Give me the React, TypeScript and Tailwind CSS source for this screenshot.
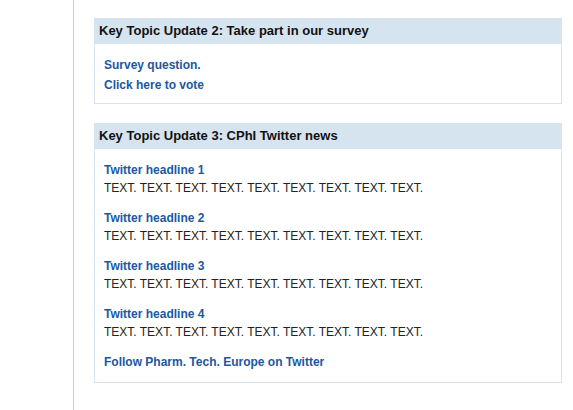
const tweets = [
  { title: "Twitter headline 1", text: "TEXT. TEXT. TEXT. TEXT. TEXT. TEXT. TEXT. TEXT. TEXT." },
  { title: "Twitter headline 2", text: "TEXT. TEXT. TEXT. TEXT. TEXT. TEXT. TEXT. TEXT. TEXT." },
  { title: "Twitter headline 3", text: "TEXT. TEXT. TEXT. TEXT. TEXT. TEXT. TEXT. TEXT. TEXT." },
  { title: "Twitter headline 4", text: "TEXT. TEXT. TEXT. TEXT. TEXT. TEXT. TEXT. TEXT. TEXT." },
];

const linkClass = "font-bold text-[12px] text-[#1c579f] hover:underline";

const TopicBox = ({ title, children }: { title: string; children: React.ReactNode }) => (
  <div className="border border-[#d6e4f0] bg-white">
    <div className="flex h-[26px] items-center bg-[#d6e4f0] px-[5px] -mx-px -mt-px">
      <h3 className="text-[13px] font-bold text-[#111]">{title}</h3>
    </div>
    {children}
  </div>
);

export default function App() {
  return (
    <div
      className="flex min-h-screen bg-white"
      style={{ fontFamily: '"Liberation Sans", Arial, Helvetica, sans-serif' }}
    >
      <div className="w-[73px] shrink-0" />
      <div className="w-px shrink-0 bg-[#cccccc]" />
      <main className="ml-[20px] flex w-[468px] flex-col gap-[19px] pt-[18px]">
        <TopicBox title="Key Topic Update 2: Take part in our survey">
          <div className="flex flex-col px-[9px] pt-[11px] pb-[8px] leading-[20px]">
            <a href="#" className={linkClass}>Survey question.</a>
            <a href="#" className={linkClass}>Click here to vote</a>
          </div>
        </TopicBox>

        <TopicBox title="Key Topic Update 3: CPhI Twitter news">
          <div className="flex flex-col gap-[12px] px-[9px] pt-[12px] pb-[11px] leading-[18px]">
            {tweets.map((t) => (
              <div key={t.title} className="flex flex-col">
                <a href="#" className={linkClass}>{t.title}</a>
                <p className="text-[12px] text-[#222]">{t.text}</p>
              </div>
            ))}
            <a href="#" className={linkClass}>Follow Pharm. Tech. Europe on Twitter</a>
          </div>
        </TopicBox>
      </main>
    </div>
  );
}
